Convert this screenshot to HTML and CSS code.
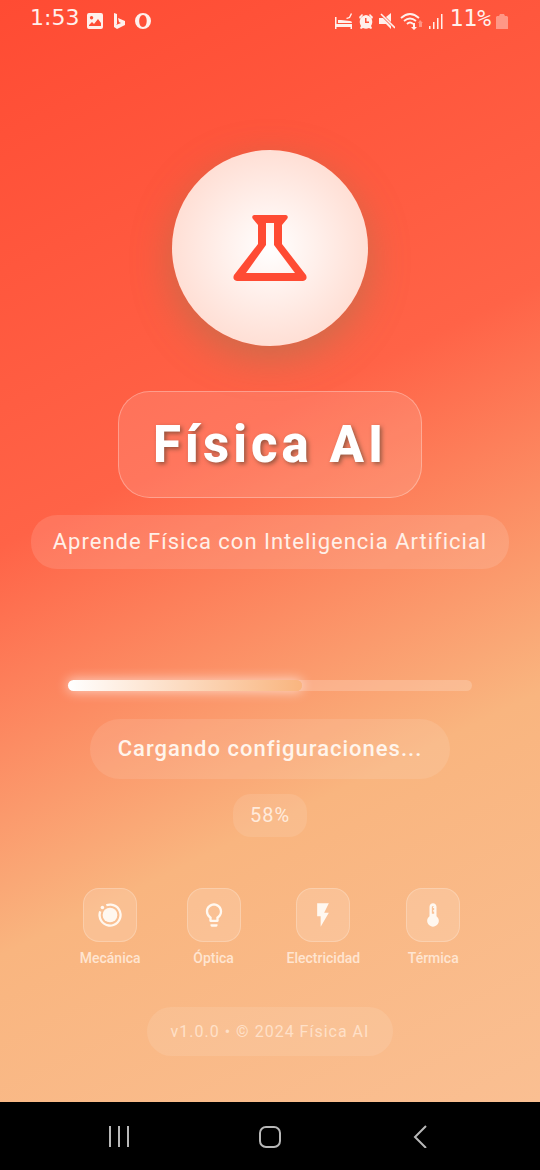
FILE: index.html
```html
<!DOCTYPE html>
<html lang="es">
<head>
<meta charset="utf-8">
<meta name="viewport" content="width=device-width, initial-scale=1">
<title>Física AI</title>
<link rel="stylesheet" href="styles.css">
</head>
<body>
<div class="screen">
  <div class="app">
  <header class="status">
    <div class="status-group">
      <span class="clock">1:53</span>
      <svg class="glyph" viewBox="0 0 16 16" aria-hidden="true"><path fill-rule="evenodd" d="M2 0h12q2 0 2 2v12q0 2-2 2H2q-2 0-2-2V2q0-2 2-2zM2 13h12v-3l-3-4-4 5-2-2-3 3zM4.500 3a1.700 1.700 0 1 0 .1 0z"/></svg>
      <svg class="glyph" viewBox="0 0 16 16" aria-hidden="true"><path d="M3 0l3 1v10l-1 1 5-2-2-1-1-4 7 3v4l-8 4-3-2z"/></svg>
      <svg class="glyph" viewBox="0 0 16 16" aria-hidden="true"><path fill-rule="evenodd" d="M8 0a8 8 0 1 1 0 16A8 8 0 0 1 8 0zm0 2C3 2 3 14 8 14s5-12 0-12z"/></svg>
    </div>
    <div class="status-group status-right">
      <svg class="glyph glyph-bed" viewBox="0 0 18 16" aria-hidden="true"><path d="M0 4h1.500v7H17v5h-1.500v-2h-14v2H0zM3 7h3l9 1q2 0 2 2H3zM11 5l3-1 2-4 1 1-2 4-3 1z"/></svg>
      <svg class="glyph" viewBox="0 0 16 16" aria-hidden="true"><path fill-rule="evenodd" d="M8 2a7 7 0 0 1 5 11l1 2-1 1-2-1a7 7 0 0 1-6 0l-2 1-1-1 1-2A7 7 0 0 1 8 2zM7 5v5h4V8.500H8.500V5zM1 4l3-3 1 1-3 4zM15 4l-3-3-1 1 3 4z"/></svg>
      <svg class="glyph" viewBox="0 0 16 16" aria-hidden="true"><path d="M0 5h4l8 8v3l-5-5H0zM7 4l5-4v9z"/><path d="M2 1l14 14" fill="none" stroke="#fff0ec" stroke-width="1.600"/></svg>
      <svg class="glyph glyph-wifi" viewBox="0 0 23 18" aria-hidden="true"><path d="M1 6q9-8 18 0M4 9q6-5 12 0M7 12q3-3 6 0" fill="none" stroke="#fff0ec" stroke-width="1.800"/><path d="M13 11h2v4h2l-3 3-3-3h2z"/><path opacity=".4" d="M19 15v-4h-1l2-3 3 3h-1v4z"/></svg>
      <svg class="glyph" viewBox="0 0 16 16" aria-hidden="true"><path d="M1 13h1.500v3H1zM5 9h1.500v7H5zM9 5h1.500v11H9zM13 1h1.500v15H13z"/></svg>
      <span class="battery-text">11%</span>
      <svg class="glyph glyph-battery" viewBox="0 0 12 16" aria-hidden="true"><path opacity=".42" d="M1 3h2l1-2h4l1 2h2l1 1v12H0V4z"/></svg>
    </div>
  </header>

  <main class="splash">
    <div class="logo">
      <svg class="flask" viewBox="0 0 74 66" aria-hidden="true"><path fill-rule="evenodd" d="M21 0h32q3 1 1 4l-5 6v19l24 31q2 5-3 6H4q-5-1-3-6l24-31V10l-5-6q-2-3 1-4zM33 8v22L13 58h49L41 30V8z"/></svg>
    </div>
    <h1 class="title">Física AI</h1>
    <p class="subtitle">Aprende Física con Inteligencia Artificial</p>

    <div class="track" role="progressbar" aria-label="Carga" aria-valuemin="0" aria-valuemax="100" aria-valuenow="58">
      <div class="fill" style="width:58%"></div>
    </div>
    <p class="loading">Cargando configuraciones...</p>
    <p class="percent">58%</p>

    <ul class="topics">
      <li class="topic">
        <span class="tile"><svg class="icon" viewBox="0 0 24 24" aria-hidden="true"><circle cx="12" cy="12" r="6.300"/><path d="M8.500 2.700A10 10 0 1 1 2.700 8.500l1.900.7A8 8 0 1 0 9.200 4.600z"/><circle cx="5.500" cy="5.500" r="1.500"/></svg></span>
        <span class="label">Mecánica</span>
      </li>
      <li class="topic">
        <span class="tile"><svg class="icon" viewBox="0 0 24 24" aria-hidden="true"><path d="M9 21c0 .55.45 1 1 1h4c.55 0 1-.45 1-1v-1H9v1zm3-19C8.140 2 5 5.140 5 9c0 2.380 1.190 4.470 3 5.740V17c0 .55.45 1 1 1h6c.55 0 1-.45 1-1v-2.260c1.810-1.270 3-3.360 3-5.740 0-3.860-3.140-7-7-7zm2.850 11.100l-.85.6V16h-4v-2.300l-.85-.6A4.997 4.997 0 0 1 7 9c0-2.760 2.240-5 5-5s5 2.240 5 5c0 1.630-.8 3.160-2.150 4.100z"/></svg></span>
        <span class="label">Óptica</span>
      </li>
      <li class="topic">
        <span class="tile"><svg class="icon" viewBox="0 0 24 24" aria-hidden="true"><path d="M7 2v11h3v9l7-12h-4l4-8z"/></svg></span>
        <span class="label">Electricidad</span>
      </li>
      <li class="topic">
        <span class="tile"><svg class="icon" viewBox="0 0 24 24" aria-hidden="true"><path fill-rule="evenodd" d="M15 13V5c0-1.660-1.340-3-3-3S9 3.340 9 5v8c-1.210.91-2 2.370-2 4 0 2.760 2.240 5 5 5s5-2.240 5-5c0-1.630-.79-3.090-2-4zM11 5q1-1.500 2 0h-1v1h1v2h-1v1h1v2h-2z"/></svg></span>
        <span class="label">Térmica</span>
      </li>
    </ul>

    <p class="version">v1.0.0 • © 2024 Física AI</p>
  </main>
  </div>

  <nav class="navbar" aria-label="Sistema">
    <button class="nav-button" aria-label="Recientes"><svg class="nav-icon" viewBox="0 0 24 24"><path d="M3 2v21M12 2v21M21 2v21"/></svg></button>
    <button class="nav-button" aria-label="Inicio"><svg class="nav-icon" viewBox="0 0 24 24"><rect x="2" y="3" width="20" height="20" rx="6"/></svg></button>
    <button class="nav-button" aria-label="Atrás"><svg class="nav-icon" viewBox="0 0 24 24"><path d="M17 2L6 13l11 11"/></svg></button>
  </nav>
</div>
</body>
</html>
```

FILE: styles.css
```css
* {
  box-sizing: border-box;
}

body {
  margin: 0;
  font-family: Roboto, "Noto Sans", sans-serif;
  color: #fff;
}

.screen {
  min-height: 100vh;
  display: flex;
  flex-direction: column;
}

.app {
  flex: 1;
  display: flex;
  flex-direction: column;
  background: linear-gradient(154deg, #ff4b33 0%, #ff6347 40%, #f9b57f 70%, #fabf92 100%);
}

.status {
  display: flex;
  justify-content: space-between;
  height: 42px;
  padding: 0 32px 0 30px;
  color: #fff0ec;
}

.status-group {
  display: flex;
  align-items: center;
  gap: 8px;
}

.status-right {
  gap: 5px;
}

.clock {
  font: 22px/36px "DejaVu Sans", sans-serif;
  height: 42px;
}

.battery-text {
  font: 23px/36px "DejaVu Sans Mono", monospace;
  height: 42px;
}

.glyph {
  width: 16px;
  height: 16px;
  fill: #fff0ec;
}

.glyph-bed {
  width: 18px;
}

.glyph-wifi {
  width: 23px;
  height: 18px;
}

.glyph-battery {
  width: 12px;
}

.splash {
  flex: 1;
  display: flex;
  flex-direction: column;
  align-items: center;
  padding: 108px 24px 44px;
}

.splash p,
.title {
  margin: 0;
}

.logo {
  display: grid;
  place-items: center;
  width: 196px;
  height: 196px;
  border-radius: 50%;
  background: radial-gradient(circle closest-side, #fff 0%, #ffdfd5 100%);
  box-shadow: 0 12px 40px rgba(135, 125, 85, 0.45);
}

.flask {
  width: 74px;
  height: 66px;
  fill: #ff4b33;
}

.splash .title {
  margin-top: 45px;
  padding: 23px 34px;
  border: 1px solid rgba(255, 255, 255, 0.3);
  border-radius: 32px;
  background: rgba(255, 255, 255, 0.12);
  font-size: 51px;
  line-height: 59px;
  font-weight: 800;
  letter-spacing: 4px;
  text-shadow: 2px 2px 4px rgba(80, 60, 40, 0.6);
}

.splash .subtitle {
  margin-top: 17px;
  padding: 14px 22px;
  border-radius: 26px;
  background: rgba(255, 255, 255, 0.12);
  color: #fff0e8;
  font-size: 22px;
  line-height: 26px;
  font-weight: 400;
  letter-spacing: 1px;
}

.track {
  width: 82%;
  height: 11px;
  margin-top: 111px;
  border-radius: 6px;
  background: rgba(255, 255, 255, 0.2);
}

.fill {
  height: 100%;
  border-radius: 6px;
  background: linear-gradient(90deg, #fff, #f9b57f);
  box-shadow: 0 0 12px 1px rgba(255, 255, 255, 0.6);
}

.splash .loading {
  margin-top: 28px;
  padding: 17px 28px;
  border-radius: 32px;
  background: rgba(255, 255, 255, 0.1);
  color: #fff5ec;
  font-size: 22px;
  line-height: 26px;
  font-weight: 500;
  letter-spacing: 1px;
}

.splash .percent {
  margin-top: 15px;
  padding: 10px 17px;
  border-radius: 18px;
  background: rgba(255, 255, 255, 0.1);
  color: #ffebdc;
  font-size: 20px;
  line-height: 23px;
  font-weight: 400;
  letter-spacing: 1px;
}

.topics {
  display: flex;
  gap: 46px;
  margin: 51px 0 0;
  padding: 0;
  list-style: none;
}

.topic {
  display: flex;
  flex-direction: column;
  align-items: center;
  gap: 7px;
}

.tile {
  display: grid;
  place-items: center;
  width: 54px;
  height: 54px;
  border: 1px solid rgba(255, 255, 255, 0.22);
  border-radius: 16px;
  background: rgba(255, 255, 255, 0.15);
}

.icon {
  width: 28px;
  height: 28px;
  fill: #fff8f0;
}

.label {
  color: #ffe5d1;
  font-size: 14px;
  line-height: 18px;
  font-weight: 500;
}

.splash .version {
  margin-top: 40px;
  padding: 14px 24px;
  border-radius: 26px;
  background: rgba(255, 255, 255, 0.1);
  color: #ffe0c8;
  font-size: 16px;
  line-height: 21px;
  letter-spacing: 1px;
}

.navbar {
  display: flex;
  justify-content: space-around;
  align-items: center;
  height: 68px;
  padding: 0 43px;
  background: #000;
}

.nav-button {
  display: grid;
  place-items: center;
  width: 48px;
  height: 48px;
  padding: 0;
  border: 0;
  background: none;
}

.nav-icon {
  width: 24px;
  height: 24px;
  fill: none;
  stroke: #b8b8b8;
  stroke-width: 2;
}
```
